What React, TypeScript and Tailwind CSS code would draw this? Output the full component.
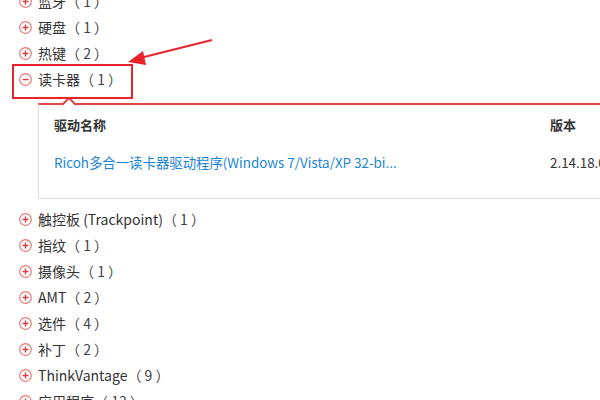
import React from "react";

const font = { fontFamily: '"Microsoft YaHei", "Noto Sans CJK SC", "Noto Sans", sans-serif' };

const ToggleIcon = ({ open }: { open?: boolean }) => (
  <svg width="13" height="13" viewBox="0 0 13 13" className="shrink-0">
    <circle cx="6.5" cy="6.5" r="5.8" fill="none" stroke="#e87878" strokeWidth="1.2" />
    <line x1="3.5" y1="6.5" x2="9.5" y2="6.5" stroke="#e0393e" strokeWidth="1.4" />
    {!open && <line x1="6.5" y1="3.5" x2="6.5" y2="9.5" stroke="#e0393e" strokeWidth="1.4" />}
  </svg>
);

const Row = ({ name, count, open }: { name: string; count: number; open?: boolean }) => (
  <div className="flex h-[26px] items-center gap-[6px] pl-[19px] text-[14px] text-[#333]">
    <ToggleIcon open={open} />
    <span className="whitespace-nowrap">
      {name}
      <span className="text-[#444]">（ {count} ）</span>
    </span>
  </div>
);

const before = [
  { name: "蓝牙", count: 1 },
  { name: "硬盘", count: 1 },
  { name: "热键", count: 2 },
];

const after = [
  { name: "触控板 (Trackpoint)", count: 1 },
  { name: "指纹", count: 1 },
  { name: "摄像头", count: 1 },
  { name: "AMT", count: 2 },
  { name: "选件", count: 4 },
  { name: "补丁", count: 2 },
  { name: "ThinkVantage", count: 9 },
  { name: "应用程序", count: 12 },
];

export default function App() {
  return (
    <div className="relative h-[400px] w-[600px] overflow-hidden bg-white" style={font}>
      <div className="-mt-[12px]">
        {before.map((r) => (
          <Row key={r.name} {...r} />
        ))}
        <Row name="读卡器" count={1} open />

        <div className="relative ml-[38px] mt-[11px] w-[600px] border-t-2 border-t-[#e04848] border-l border-l-[#ddd] border-b border-b-[#ddd]">
          <svg width="14" height="8" viewBox="0 0 14 8" className="absolute -top-[7px] left-[23px]">
            <polygon points="0,7 7,0 14,7" fill="white" />
            <polyline points="0,7 7,0 14,7" fill="none" stroke="#e04848" strokeWidth="2" />
          </svg>
          <div className="flex pt-[10px] text-[13px] font-bold text-[#333]">
            <div className="w-[511px] pl-[15px]">驱动名称</div>
            <div>版本</div>
          </div>
          <div className="flex pt-[17px] pb-[26px] text-[13.4px]">
            <div className="w-[511px] pl-[15px] text-[#1a85d6] whitespace-nowrap">
              Ricoh多合一读卡器驱动程序(Windows 7/Vista/XP 32-bi...
            </div>
            <div className="whitespace-nowrap text-[#333]">2.14.18.0</div>
          </div>
        </div>

        <div className="mt-[8px]">
          {after.map((r) => (
            <Row key={r.name} {...r} />
          ))}
        </div>
      </div>

      {/* annotation box */}
      <div className="pointer-events-none absolute left-[12px] top-[64px] h-[35px] w-[121px] border-2 border-[#e8232b]" />
      {/* annotation arrow */}
      <svg className="pointer-events-none absolute left-0 top-0" width="600" height="400">
        <line x1="212" y1="40" x2="140" y2="58" stroke="#e8232b" strokeWidth="2" />
        <polygon points="128,62 143,51 146,65" fill="#e8232b" />
      </svg>
    </div>
  );
}
